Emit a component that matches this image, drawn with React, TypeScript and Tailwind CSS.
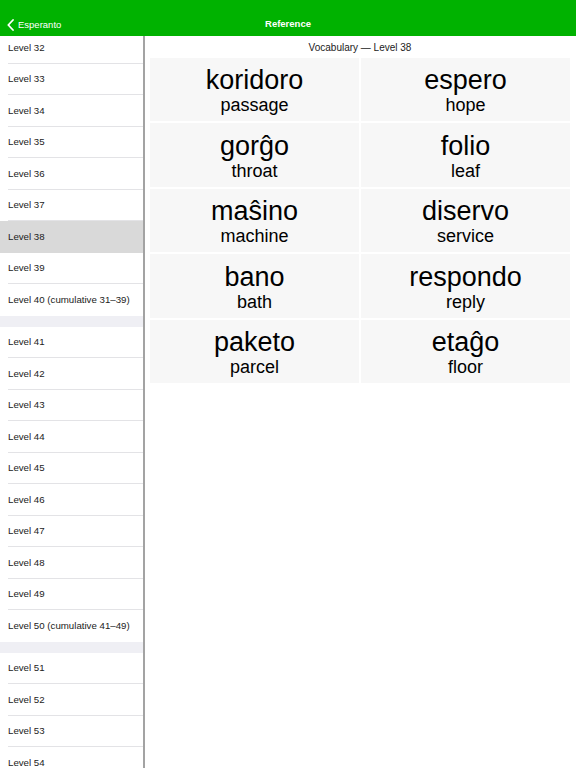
import React from "react";

const font = { fontFamily: '"Liberation Sans", Arial, sans-serif' };

type Item = { label: string; band?: boolean };

const levels: Item[] = [
  { label: "Level 32" },
  { label: "Level 33" },
  { label: "Level 34" },
  { label: "Level 35" },
  { label: "Level 36" },
  { label: "Level 37" },
  { label: "Level 38" },
  { label: "Level 39" },
  { label: "Level 40 (cumulative 31–39)", band: true },
  { label: "Level 41" },
  { label: "Level 42" },
  { label: "Level 43" },
  { label: "Level 44" },
  { label: "Level 45" },
  { label: "Level 46" },
  { label: "Level 47" },
  { label: "Level 48" },
  { label: "Level 49" },
  { label: "Level 50 (cumulative 41–49)", band: true },
  { label: "Level 51" },
  { label: "Level 52" },
  { label: "Level 53" },
  { label: "Level 54" },
];

const words = [
  ["koridoro", "passage"],
  ["espero", "hope"],
  ["gorĝo", "throat"],
  ["folio", "leaf"],
  ["maŝino", "machine"],
  ["diservo", "service"],
  ["bano", "bath"],
  ["respondo", "reply"],
  ["paketo", "parcel"],
  ["etaĝo", "floor"],
];

const Row = ({ item }: { item: Item }) => {
  const selected = item.label === "Level 38";
  return (
    <>
      <div className={`relative h-[31.5px] flex items-center pl-[8px] pt-[1px] text-[9.7px] text-[#222] ${selected ? "bg-[#d9d9d9]" : "bg-white"}`}>
        {item.label}
        {!item.band && !selected && (
          <div className="absolute bottom-0 left-[8px] right-0 h-px bg-[#e3e3e6]" />
        )}
      </div>
      {item.band && <div className="h-[11px] bg-[#efeff4]" />}
    </>
  );
};

export default function App() {
  return (
    <div className="w-[576px] h-[768px] overflow-hidden bg-white flex flex-col" style={font}>
      <div className="h-9 bg-[#00b200] relative z-10 flex items-end pb-[4px] shrink-0">
        <div className="flex items-center pl-[7px] gap-[4px] text-white text-[9.5px]">
          <svg width="7" height="12" viewBox="0 0 7 12" fill="none">
            <path d="M6 1 L1.3 6 L6 11" stroke="white" strokeWidth="1.8" strokeLinecap="round" strokeLinejoin="round" />
          </svg>
          <span>Esperanto</span>
        </div>
        <div className="absolute left-0 right-0 bottom-[5px] text-center text-white text-[9.5px] font-bold">
          Reference
        </div>
      </div>
      <div className="flex flex-1 min-h-0">
        <div className="w-[143px] shrink-0 overflow-hidden">
          <div className="-mt-[4px]">
            {levels.map((l) => (
              <Row key={l.label} item={l} />
            ))}
          </div>
        </div>
        <div className="w-[1.5px] bg-[#a3a3a3] shrink-0" />
        <div className="flex-1 pt-[5px] pl-[5.5px] pr-[6px]">
          <div className="text-center text-[10px] leading-[14px] text-[#222]">
            Vocabulary — Level 38
          </div>
          <div className="mt-[2.5px] grid grid-cols-2 gap-[2px]">
            {words.map(([w, t]) => (
              <div key={w} className="h-[63.5px] pt-[2px] bg-[#f7f7f7] flex flex-col items-center justify-center text-black">
                <div className="text-[27px] leading-[30px]">{w}</div>
                <div className="text-[18px] leading-[20px]">{t}</div>
              </div>
            ))}
          </div>
        </div>
      </div>
    </div>
  );
}
